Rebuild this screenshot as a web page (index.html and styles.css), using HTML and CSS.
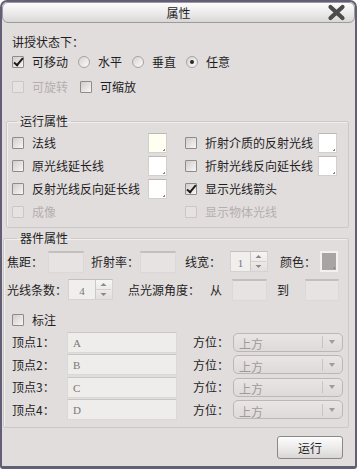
FILE: index.html
```html
<!DOCTYPE html>
<html lang="zh-CN">
<head>
    <meta charset="UTF-8">
    <meta name="viewport" content="width=device-width, initial-scale=1.0">
    <title>属性</title>
    <link rel="stylesheet" href="styles.css">
</head>
<body>

    <div class="window">
        <div class="titlebar">
            <span class="title">属性</span>
            <svg class="close" width="19" height="17" viewBox="0 0 19 17">
                <path d="M3.5 3 L15.5 14 M15.5 3 L3.5 14" stroke="#4c4c4c" stroke-width="4.2" stroke-linecap="round"/>
            </svg>
        </div>

        <div class="content">
            <div class="heading">讲授状态下：</div>
            <div class="row">
                <span class="cb checked"></span><span class="lbl">可移动</span>
                <span class="radio"></span><span class="lbl">水平</span>
                <span class="radio"></span><span class="lbl">垂直</span>
                <span class="radio on"></span><span class="lbl">任意</span>
            </div>
            <div class="row row3">
                <span class="cb disabled"></span><span class="lbl off">可旋转</span>
                <span class="cb"></span><span class="lbl">可缩放</span>
            </div>
        </div>

        <fieldset class="group g1">
            <legend>运行属性</legend>
            <div class="grid">
                <div class="cell left">
                    <span class="cb"></span><span class="lbl grow">法线</span><span class="swatch yellow"></span>
                </div>
                <div class="cell right">
                    <span class="cb"></span><span class="lbl grow">折射介质的反射光线</span><span class="swatch"></span>
                </div>
                <div class="cell left">
                    <span class="cb"></span><span class="lbl grow">原光线延长线</span><span class="swatch"></span>
                </div>
                <div class="cell right">
                    <span class="cb"></span><span class="lbl grow">折射光线反向延长线</span><span class="swatch"></span>
                </div>
                <div class="cell left">
                    <span class="cb"></span><span class="lbl grow">反射光线反向延长线</span><span class="swatch"></span>
                </div>
                <div class="cell right">
                    <span class="cb checked"></span><span class="lbl grow">显示光线箭头</span>
                </div>
                <div class="cell left">
                    <span class="cb disabled"></span><span class="lbl off">成像</span>
                </div>
                <div class="cell right">
                    <span class="cb disabled"></span><span class="lbl off">显示物体光线</span>
                </div>
            </div>
        </fieldset>

        <fieldset class="group g2">
            <legend>器件属性</legend>
            <div class="prow pa">
                <span class="plbl w41">焦距：</span>
                <span class="field w36"></span>
                <span class="plbl w49 ml7">折射率：</span>
                <span class="field w36"></span>
                <span class="plbl w45 ml9">线宽：</span>
                <span class="spin w38"><span class="val">1</span><span class="arrows">
                    <svg width="15" height="9" viewBox="0 0 15 9"><path d="M4.5 6 L7.5 3 L10.5 6 Z" fill="#8c8888"/></svg>
                    <svg width="15" height="9" viewBox="0 0 15 9"><path d="M4.5 3 L7.5 6 L10.5 3 Z" fill="#8c8888"/></svg>
                </span></span>
                <span class="plbl w40 ml12">颜色：</span>
                <span class="swatch gray"></span>
            </div>
            <div class="prow pb">
                <span class="plbl w61">光线条数：</span>
                <span class="spin w45"><span class="val">4</span><span class="arrows">
                    <svg width="15" height="9" viewBox="0 0 15 9"><path d="M4.5 6 L7.5 3 L10.5 6 Z" fill="#8c8888"/></svg>
                    <svg width="15" height="9" viewBox="0 0 15 9"><path d="M4.5 3 L7.5 6 L10.5 3 Z" fill="#8c8888"/></svg>
                </span></span>
                <span class="plbl w82 ml15">点光源角度：</span>
                <span class="plbl w22">从</span>
                <span class="field w35 tall"></span>
                <span class="plbl w28 ml10">到</span>
                <span class="field w34 tall"></span>
            </div>
            <div class="prow mark">
                <span class="cb"></span><span class="lbl">标注</span>
            </div>
            <div class="vrow">
                <span class="plbl w55">顶点1：</span>
                <span class="field vfield">A</span>
                <span class="plbl w40 ml16">方位：</span>
                <span class="combo"><span class="ctext">上方</span><span class="sep"></span>
                    <svg width="12" height="8" viewBox="0 0 12 8"><path d="M3 2 L9 2 L6 6 Z" fill="#a09c9c"/></svg></span>
            </div>
            <div class="vrow">
                <span class="plbl w55">顶点2：</span>
                <span class="field vfield">B</span>
                <span class="plbl w40 ml16">方位：</span>
                <span class="combo"><span class="ctext">上方</span><span class="sep"></span>
                    <svg width="12" height="8" viewBox="0 0 12 8"><path d="M3 2 L9 2 L6 6 Z" fill="#a09c9c"/></svg></span>
            </div>
            <div class="vrow">
                <span class="plbl w55">顶点3：</span>
                <span class="field vfield">C</span>
                <span class="plbl w40 ml16">方位：</span>
                <span class="combo"><span class="ctext">上方</span><span class="sep"></span>
                    <svg width="12" height="8" viewBox="0 0 12 8"><path d="M3 2 L9 2 L6 6 Z" fill="#a09c9c"/></svg></span>
            </div>
            <div class="vrow">
                <span class="plbl w55">顶点4：</span>
                <span class="field vfield">D</span>
                <span class="plbl w40 ml16">方位：</span>
                <span class="combo"><span class="ctext">上方</span><span class="sep"></span>
                    <svg width="12" height="8" viewBox="0 0 12 8"><path d="M3 2 L9 2 L6 6 Z" fill="#a09c9c"/></svg></span>
            </div>
        </fieldset>

        <div class="footer">
            <button class="run">运行</button>
        </div>
    </div>

</body>
</html>
```

FILE: styles.css
```css
body {
    margin: 0;
    font-family: "Noto Sans CJK SC", "Noto Sans", sans-serif;
    font-size: 12px;
    color: #1e1e1e;
}
.window {
    width: 357px;
    height: 469px;
    box-sizing: border-box;
    border: 2px solid #625e74;
    border-bottom-width: 3px;
    border-radius: 7px 7px 3px 3px;
    background: #e2dddd;
    overflow: hidden;
}
.titlebar {
    height: 21px;
    box-sizing: border-box;
    border: 1px solid #9d99a3;
    border-radius: 6px;
    background: linear-gradient(#fdfdfd, #e9e7e7 60%, #d9d6d6);
    display: flex;
    align-items: center;
    justify-content: center;
    position: relative;
}
.title {
    font-size: 12px;
    line-height: 19px;
}
.close {
    position: absolute;
    right: 8px;
    top: 1px;
}
.content {
    padding-left: 8px;
}
.heading {
    margin-top: 10px;
    height: 18px;
    line-height: 18px;
    padding-left: 2px;
}
.row {
    height: 22px;
    display: flex;
    align-items: center;
}
.row3 {
    margin-top: 3px;
}
.cb {
    width: 12px;
    height: 12px;
    box-sizing: border-box;
    border: 1px solid #8f8b8b;
    border-radius: 1px;
    background: linear-gradient(135deg, #d2cdcd, #f7f5f5);
    margin-left: 2px;
    flex: none;
    position: relative;
}
.cb.checked::after {
    content: "";
    position: absolute;
    left: 3px;
    top: -1px;
    width: 3px;
    height: 8px;
    border: solid #1a1a1a;
    border-width: 0 2px 2px 0;
    transform: rotate(40deg);
}
.cb.disabled {
    border-color: #cbc7c7;
    background: #e6e2e2;
}
.lbl {
    margin-left: 8px;
    margin-right: 10px;
    line-height: 22px;
    white-space: nowrap;
}
.lbl.off {
    color: #b3afaf;
}
.radio {
    width: 12px;
    height: 12px;
    box-sizing: border-box;
    border: 1px solid #a6a2a2;
    border-radius: 50%;
    background: linear-gradient(135deg, #d6d2d2, #fbfafa);
    flex: none;
    position: relative;
}
.radio.on::after {
    content: "";
    position: absolute;
    left: 3px;
    top: 3px;
    width: 4px;
    height: 4px;
    border-radius: 50%;
    background: #2a2a2a;
}
.group {
    margin: 0;
    padding: 0;
    border: 1px solid #cdc8c8;
    border-radius: 2px;
    box-shadow: inset 1px 1px 0 #f1eeee;
    min-width: 0;
}
.group legend {
    line-height: 18px;
    padding: 0 3px;
}
.g1 {
    margin: 14px 6px 0 4px;
    padding: 1px 0 4px 3px;
}
.g1 legend {
    margin-left: 7px;
}
.grid {
    display: grid;
    grid-template-columns: 173px 154px;
}
.cell {
    height: 23px;
    display: flex;
    align-items: center;
}
.left {
    padding-right: 16px;
}
.grow {
    flex: 1;
    min-width: 0;
    margin-right: 0;
}
.swatch {
    width: 19px;
    height: 20px;
    box-sizing: border-box;
    border: 1px solid #d4cfcf;
    border-top-color: #bdb8b8;
    background: linear-gradient(to top left, #8a8686 2px, transparent 2px) no-repeat right 1px bottom 1px / 4px 4px, #ffffff;
    flex: none;
}
.swatch.yellow {
    background-color: #fefff0;
}
.swatch.gray {
    width: 18px;
    height: 21px;
    background-color: #a8a4a4;
    border: 2px solid #f2f0f0;
}
.g2 {
    margin: 1px 6px 0 1px;
    padding: 3px 0 6px 3px;
}
.g2 legend {
    margin-left: 10px;
}
.prow {
    display: flex;
    align-items: center;
    height: 23px;
}
.pb {
    margin-top: 5px;
}
.mark {
    margin-top: 8px;
    height: 22px;
    padding-left: 3px;
}
.plbl {
    flex: none;
    white-space: nowrap;
    line-height: 22px;
}
.w22 { width: 22px; }
.w28 { width: 28px; }
.w40 { width: 40px; }
.w41 { width: 41px; }
.w45 { width: 45px; }
.w49 { width: 49px; }
.w55 { width: 55px; }
.w61 { width: 61px; }
.w82 { width: 82px; }
.ml7 { margin-left: 7px; }
.ml9 { margin-left: 9px; }
.ml10 { margin-left: 10px; }
.ml12 { margin-left: 12px; }
.ml15 { margin-left: 15px; }
.ml16 { margin-left: 16px; }
.field {
    flex: none;
    height: 22px;
    box-sizing: border-box;
    border: 1px solid #dcd8d8;
    border-top: 2px solid #c4bfbf;
    background: #e7e3e3;
}
.w34 { width: 34px; }
.w35 { width: 35px; }
.w36 { width: 36px; }
.spin {
    flex: none;
    height: 21px;
    box-sizing: border-box;
    border: 1px solid #d6d2d2;
    border-top-color: #c4bfbf;
    display: flex;
    background: #f1eeee;
}
.spin.w38 { width: 38px; }
.spin.w45 { width: 45px; }
.spin .val {
    flex: 1;
    font-family: "Liberation Serif", serif;
    font-size: 11px;
    color: #777;
    text-align: center;
    line-height: 21px;
    padding-top: 1px;
}
.arrows {
    width: 16px;
    border-left: 1px solid #cdc8c8;
    display: flex;
    flex-direction: column;
    background: linear-gradient(#f6f4f4, #e3dfdf);
}
.arrows svg {
    display: block;
    flex: 1;
}
.arrows svg + svg {
    border-top: 1px solid #d4d0d0;
}
.vrow {
    display: flex;
    align-items: center;
    height: 22.5px;
    padding-left: 5px;
}
.vfield {
    width: 110px;
    height: 21px;
    background: #efecec;
    border: 1px solid #dcd8d8;
    border-top: 1px solid #cbc6c6;
    font-family: "Liberation Serif", serif;
    font-size: 11px;
    color: #7a7676;
    padding-left: 5px;
    line-height: 21px;
}
.combo {
    flex: none;
    width: 110px;
    height: 19px;
    box-sizing: border-box;
    border: 1px solid #bcb7b7;
    border-radius: 5px;
    background: linear-gradient(#e9e5e5, #dedada);
    display: flex;
    align-items: center;
}
.ctext {
    flex: 1;
    color: #9e9a9a;
    padding-left: 5px;
    line-height: 17px;
    padding-top: 3px;
}
.sep {
    width: 1px;
    height: 12px;
    background: #c9c4c4;
    margin-right: 3px;
}
.combo svg {
    margin-right: 4px;
}
.footer {
    display: flex;
    justify-content: flex-end;
    padding-right: 12px;
    margin-top: 8px;
}
.run {
    width: 66px;
    height: 23px;
    border: 1px solid #8c8888;
    border-radius: 3px;
    background: linear-gradient(#fdfdfd, #e6e3e3 70%, #d8d5d5);
    font-family: "Noto Sans CJK SC", sans-serif;
    font-size: 12px;
    color: #1e1e1e;
    padding: 0;
}
```
